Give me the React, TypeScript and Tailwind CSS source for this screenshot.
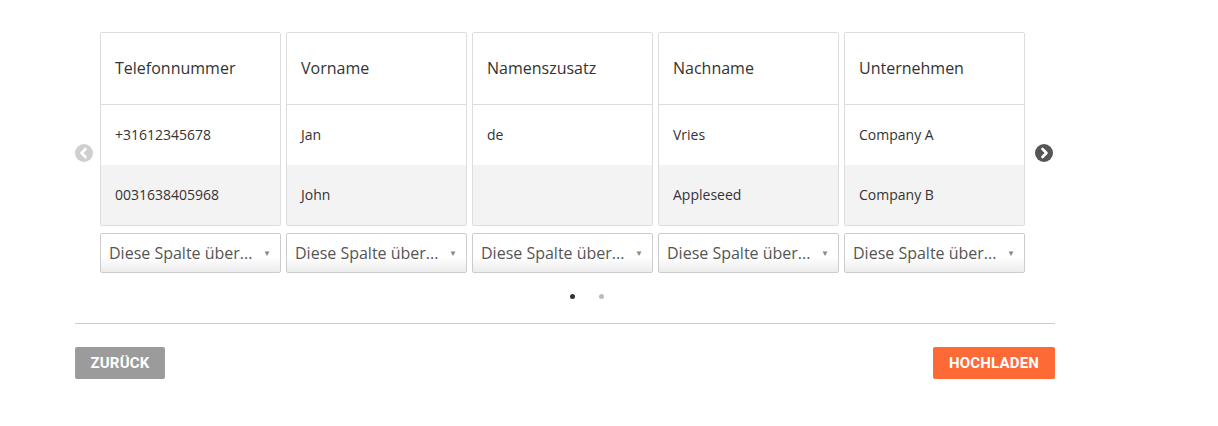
import React from "react";

const cols = [
  { h: "Telefonnummer", a: "+31612345678", b: "0031638405968" },
  { h: "Vorname", a: "Jan", b: "John" },
  { h: "Namenszusatz", a: "de", b: "" },
  { h: "Nachname", a: "Vries", b: "Appleseed" },
  { h: "Unternehmen", a: "Company A", b: "Company B" },
];

function CircleArrow({ dir, color }: { dir: "left" | "right"; color: string }) {
  return (
    <svg width="18" height="18" viewBox="0 0 18 18">
      <circle cx="9" cy="9" r="9" fill={color} />
      {dir === "left" ? (
        <path d="M10.5 5 L6.5 9 L10.5 13" stroke="#fff" strokeWidth="2.6" fill="none" strokeLinecap="round" strokeLinejoin="round" />
      ) : (
        <path d="M7.5 5 L11.5 9 L7.5 13" stroke="#fff" strokeWidth="2.6" fill="none" strokeLinecap="round" strokeLinejoin="round" />
      )}
    </svg>
  );
}

export default function App() {
  return (
    <div className="bg-white w-[1218px] h-[426px] pt-8 pl-[75px]" style={{ fontFamily: '"Open Sans", sans-serif' }}>
      <div className="w-[980px]">
        <div className="flex items-center">
          <div className="w-[18px] h-[18px] flex"><CircleArrow dir="left" color="#cfcfcf" /></div>
          <div className="flex gap-[5px] ml-[7px]">
            {cols.map((c) => (
              <div key={c.h} className="flex flex-col w-[181px]">
                <div className="border border-[#dddddd] rounded-[2px] overflow-hidden">
                  <div className="h-[72px] flex items-center pl-[14px] pb-[2px] text-[16px] text-[#333] border-b border-[#dddddd] bg-white">
                    {c.h}
                  </div>
                  <div className="h-[60px] flex items-center pl-[14px] pb-[2px] text-[14px] text-[#333] bg-white">{c.a}</div>
                  <div className="h-[60px] flex items-center pl-[14px] pb-[2px] text-[14px] text-[#333] bg-[#f3f3f3]">{c.b}</div>
                </div>
                <div className="mt-[7px] h-[40px] border border-[#cccccc] rounded-[2px] bg-gradient-to-b from-white from-60% to-[#ececec] flex items-center justify-between pl-[8px] pr-[9px]">
                  <span className="text-[16px] text-[#555]">Diese Spalte über...</span>
                  <span className="text-[8px] text-[#888]">▼</span>
                </div>
              </div>
            ))}
          </div>
          <div className="w-[18px] h-[18px] flex ml-[10px]"><CircleArrow dir="right" color="#555555" /></div>
        </div>
        <div className="flex items-center gap-[24px] ml-[495px] mt-[20px] h-[6px]">
          <div className="w-[5px] h-[5px] rounded-full bg-[#333]" />
          <div className="w-[5px] h-[5px] rounded-full bg-[#bbb]" />
        </div>
        <div className="mt-[24px] border-t border-[#cccccc]" />
        <div className="mt-[23px] flex justify-between">
          <button className="h-[32px] w-[90px] rounded-[2px] bg-[#9b9b9b] text-white font-bold text-[15px] tracking-[0.2px]" style={{ fontFamily: "Roboto, sans-serif" }}>
            ZURÜCK
          </button>
          <button className="h-[32px] w-[122px] rounded-[2px] bg-[#fe6a35] text-white font-bold text-[15px] tracking-[0.2px]" style={{ fontFamily: "Roboto, sans-serif" }}>
            HOCHLADEN
          </button>
        </div>
      </div>
    </div>
  );
}
